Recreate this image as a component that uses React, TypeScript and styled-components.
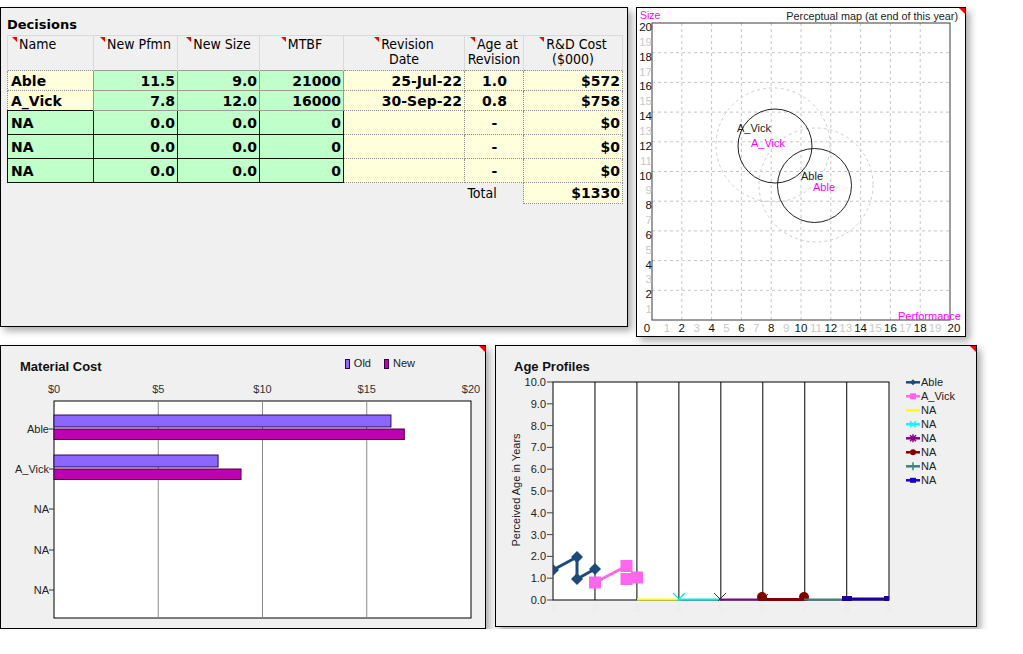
import React from "react";
import styled, { createGlobalStyle, css } from "styled-components";

const GlobalStyle = createGlobalStyle`
  html, body {
    margin: 0;
    padding: 0;
    background: #fff;
  }
  body {
    font-family: "Liberation Sans", Arial, sans-serif;
    color: #000;
  }
`;

const Page = styled.div`
  display: flex;
  flex-direction: column;
  gap: 8px;
  padding-top: 7px;
  width: 1023px;
`;

const Row = styled.div<{ $gap: number }>`
  display: flex;
  align-items: flex-start;
  gap: ${(p) => p.$gap}px;
`;

const Panel = styled.section<{ $w: number; $h: number; $bg?: string }>`
  position: relative;
  box-sizing: border-box;
  flex-shrink: 0;
  width: ${(p) => p.$w}px;
  height: ${(p) => p.$h}px;
  border: 1px solid #000;
  background: ${(p) => p.$bg ?? "#f0f0f0"};
  box-shadow: 4px 4px 7px rgba(0, 0, 0, 0.32);
`;

// red flag in the top right corner of a panel
const CornerMark = styled.span`
  position: absolute;
  top: 0;
  right: 0;
  width: 0;
  height: 0;
  border-top: 6px solid #f00;
  border-left: 6px solid transparent;
`;

const DecisionsBody = styled.div`
  padding: 0 6px;
`;

const DecTitle = styled.h2`
  margin: 0;
  padding: 9px 0 3px;
  font: 700 13px/15px "DejaVu Sans", Verdana, sans-serif;
`;

const Table = styled.table`
  border-collapse: collapse;
  table-layout: fixed;
  width: 615px;
  font-family: "DejaVu Sans", Verdana, sans-serif;
  font-size: 14px;
`;

const Th = styled.th<{ $left?: boolean }>`
  height: 35px;
  box-sizing: border-box;
  padding: 1px 2px 0 ${(p) => (p.$left ? "4px" : "2px")};
  vertical-align: top;
  text-align: ${(p) => (p.$left ? "left" : "center")};
  background: #f0f0f0;
  border: 1px solid #d9d9d9;
  border-bottom: none;
  font: 400 14px/15px "DejaVu Sans Condensed", "Liberation Sans", sans-serif;
  white-space: nowrap;
`;

const Mark = styled.span`
  display: inline-block;
  width: 0;
  height: 0;
  vertical-align: top;
  margin: 0 2px 0 0;
  border-top: 5px solid #f00;
  border-left: 5px solid transparent;
`;

type Kind = "yellow" | "green" | "plain";

const Td = styled.td<{ $kind: Kind; $align?: "left" | "right" | "center"; $h: number; $soft?: boolean }>`
  height: ${(p) => p.$h}px;
  box-sizing: border-box;
  padding: 0 2px 0 3px;
  text-align: ${(p) => p.$align ?? "right"};
  font-weight: 700;
  white-space: nowrap;
  ${(p) =>
    p.$kind === "yellow" &&
    css`
      background: #ffffdc;
      border: 1px dotted #8c8c8c;
    `}
  ${(p) =>
    p.$kind === "green" &&
    css`
      background: #c1ffca;
      border: 1px solid ${p.$soft ? "#9a9a9a" : "#111"};
    `}
  ${(p) =>
    p.$kind === "plain" &&
    css`
      border: none;
      font: 400 14px/15px "DejaVu Sans Condensed", "Liberation Sans", sans-serif;
    `}
`;

const ChartHeader = styled.div<{ $pad: number }>`
  display: flex;
  align-items: flex-start;
  height: 30px;
  box-sizing: border-box;
  padding: 13px 0 0 ${(p) => p.$pad}px;
`;

const ChartTitle = styled.h3`
  margin: 0;
  font: 700 13px/15px "Liberation Sans", Arial, sans-serif;
  color: #111;
`;

const Legend = styled.div`
  display: flex;
  gap: 13px;
  margin: -2px 70px 0 auto;
  font: 400 11px/13px "Liberation Sans", Arial, sans-serif;
  color: #222;
`;

const LegendItem = styled.span`
  display: flex;
  align-items: center;
  gap: 4px;
`;

const Swatch = styled.span<{ $color: string }>`
  display: inline-block;
  width: 3px;
  height: 8px;
  border: 1px solid #330044;
  background: ${(p) => p.$color};
`;

const ChartSvg = styled.svg`
  display: block;
  font-family: "Liberation Sans", Arial, sans-serif;
`;

const rows = [
  { name: "Able", pf: "11.5", sz: "9.0", mtbf: "21000", date: "25-Jul-22", age: "1.0", cost: "$572", mine: true },
  { name: "A_Vick", pf: "7.8", sz: "12.0", mtbf: "16000", date: "30-Sep-22", age: "0.8", cost: "$758", mine: true },
  { name: "NA", pf: "0.0", sz: "0.0", mtbf: "0", date: "", age: "-", cost: "$0", mine: false },
  { name: "NA", pf: "0.0", sz: "0.0", mtbf: "0", date: "", age: "-", cost: "$0", mine: false },
  { name: "NA", pf: "0.0", sz: "0.0", mtbf: "0", date: "", age: "-", cost: "$0", mine: false },
];

const colWidths = [86, 84, 82, 84, 121, 59, 99];

const Decisions = () => (
  <Panel $w={628} $h={320}>
    <DecisionsBody>
      <DecTitle>Decisions</DecTitle>
      <Table>
        <colgroup>
          {colWidths.map((w, i) => (
            <col key={i} style={{ width: w }} />
          ))}
        </colgroup>
        <thead>
          <tr>
            <Th $left>
              <Mark />
              Name
            </Th>
            <Th>
              <Mark />
              New Pfmn
            </Th>
            <Th>
              <Mark />
              New Size
            </Th>
            <Th>
              <Mark />
              MTBF
            </Th>
            <Th>
              <Mark />
              Revision
              <br />
              Date
            </Th>
            <Th>
              <Mark />
              Age at
              <br />
              Revision
            </Th>
            <Th>
              <Mark />
              R&amp;D Cost
              <br />
              ($000)
            </Th>
          </tr>
        </thead>
        <tbody>
          {rows.map((r, i) => {
            const h = r.mine ? 20 : 24;
            return (
              <tr key={i}>
                <Td $kind={r.mine ? "yellow" : "green"} $align="left" $h={h}>
                  {r.name}
                </Td>
                <Td $kind="green" $soft={r.mine} $h={h}>{r.pf}</Td>
                <Td $kind="green" $soft={r.mine} $h={h}>{r.sz}</Td>
                <Td $kind="green" $soft={r.mine} $h={h}>{r.mtbf}</Td>
                <Td $kind="yellow" $h={h}>{r.date}</Td>
                <Td $kind="yellow" $align="center" $h={h}>{r.age}</Td>
                <Td $kind="yellow" $h={h}>{r.cost}</Td>
              </tr>
            );
          })}
          <tr>
            <Td $kind="plain" $h={21} />
            <Td $kind="plain" $h={21} />
            <Td $kind="plain" $h={21} />
            <Td $kind="plain" $h={21} />
            <Td $kind="plain" $h={21} />
            <Td $kind="plain" $align="left" $h={21}>
              Total
            </Td>
            <Td $kind="yellow" $h={21}>$1330</Td>
          </tr>
        </tbody>
      </Table>
    </DecisionsBody>
  </Panel>
);

/* ---------- perceptual map ---------- */

const mx = (u: number) => 652 + u * 14.9;
const my = (u: number) => 320 - u * 14.85;
const units = Array.from({ length: 21 }, (_, i) => i);

const PerceptualMap = () => (
  <Panel $w={330} $h={330} $bg="#fff">
    <ChartSvg width={328} height={328} viewBox="637 8 328 328">
      {units
        .filter((u) => u > 0 && u < 20 && u % 2 === 0)
        .map((u) => (
          <g key={u} stroke="#c6c6c6" strokeDasharray="3 3">
            <line x1={mx(u)} x2={mx(u)} y1={my(20)} y2={my(0)} />
            <line x1={mx(0)} x2={mx(20)} y1={my(u)} y2={my(u)} />
          </g>
        ))}
      <rect x={652} y={my(20)} width={298} height={297} fill="none" stroke="#3a3a3a" />

      <circle cx={773} cy={145} r={57} fill="none" stroke="#cdcdcd" strokeDasharray="3 3" />
      <circle cx={816} cy={185} r={57} fill="none" stroke="#cdcdcd" strokeDasharray="3 3" />
      <circle cx={775} cy={146} r={37} fill="none" stroke="#222" />
      <circle cx={814.5} cy={185.5} r={37} fill="none" stroke="#222" />

      <g fontSize={11}>
        <text x={737} y={132} fill="#222">A_Vick</text>
        <text x={751} y={147} fill="#f0f">A_Vick</text>
        <text x={801} y={180} fill="#222">Able</text>
        <text x={813} y={191} fill="#f0f">Able</text>
      </g>

      <g fontSize={11.5}>
        {units
          .filter((u) => u > 0)
          .map((u) => (
            <text key={u} x={652} y={my(u) + 8} textAnchor="end" fill={u % 2 === 0 ? "#111" : "#c8c8c8"}>
              {u}
            </text>
          ))}
        {units.map((u) => (
          <text
            key={u}
            x={u === 0 ? 647 : u === 20 ? 954 : mx(u)}
            y={332}
            textAnchor="middle"
            fill={u % 2 === 0 ? "#111" : "#c8c8c8"}
          >
            {u}
          </text>
        ))}
      </g>

      <text x={640} y={19} fontSize={10.5} fill="#f0f">
        Size
      </text>
      <text x={961} y={320} fontSize={11} fill="#f0f" textAnchor="end">
        Performance
      </text>
      <text x={958} y={20} fontSize={10.8} fill="#222" textAnchor="end">
        Perceptual map (at end of this year)
      </text>
    </ChartSvg>
    <CornerMark />
  </Panel>
);

/* ---------- material cost ---------- */

const cx = (v: number) => 54 + v * 20.85;
const costBars = [
  { name: "Able", y: 429, old: 16.16, now: 16.8 },
  { name: "A_Vick", y: 469, old: 7.87, now: 8.97 },
  { name: "NA", y: 509 },
  { name: "NA", y: 550 },
  { name: "NA", y: 590 },
];

const MaterialCost = () => (
  <Panel $w={486} $h={284}>
    <ChartHeader $pad={19}>
      <ChartTitle>Material Cost</ChartTitle>
      <Legend>
        <LegendItem>
          <Swatch $color="#8c66ff" />
          Old
        </LegendItem>
        <LegendItem>
          <Swatch $color="#bf00b0" />
          New
        </LegendItem>
      </Legend>
    </ChartHeader>
    <ChartSvg width={484} height={252} viewBox="1 376 484 252">
      <g fontSize={11} fill="#333" textAnchor="middle">
        {[0, 5, 10, 15, 20].map((v) => (
          <text key={v} x={cx(v)} y={393}>
            ${v}
          </text>
        ))}
      </g>
      <rect x={54} y={401} width={417} height={217} fill="#fff" stroke="#000" />
      {[5, 10, 15].map((v) => (
        <line key={v} x1={cx(v)} x2={cx(v)} y1={401} y2={618} stroke="#8a8a8a" />
      ))}
      {costBars.map((b, i) => (
        <g key={i}>
          <line x1={49} x2={54} y1={b.y} y2={b.y} stroke="#333" />
          <text x={49} y={b.y + 4} fontSize={11} fill="#222" textAnchor="end">
            {b.name}
          </text>
          {b.old !== undefined && (
            <rect x={54} y={b.y - 14} width={cx(b.old) - 54} height={12} fill="#8c66ff" stroke="#2a0a55" />
          )}
          {b.now !== undefined && (
            <rect x={54} y={b.y} width={cx(b.now) - 54} height={10.5} fill="#bf00b0" stroke="#4a0040" />
          )}
        </g>
      ))}
    </ChartSvg>
    <CornerMark />
  </Panel>
);

/* ---------- age profiles ---------- */

const ax = (i: number) => 553 + (i - 1) * 41.96;
const ay = (v: number) => 600 - v * 21.8;

const diamond = (x: number, y: number, s: number) =>
  `M${x} ${y - s} L${x + s} ${y} L${x} ${y + s} L${x - s} ${y} Z`;

const ablePts = [
  [553, 570],
  [577, 557],
  [577, 579],
  [595, 569],
];
const vickPts = [
  [595, 582.5],
  [626.5, 566],
  [626.5, 579],
  [637, 577.5],
];

const legendItems = [
  { name: "Able", color: "#1b4b7d", kind: "diamond" },
  { name: "A_Vick", color: "#ff66ee", kind: "square" },
  { name: "NA", color: "#ffff00", kind: "line" },
  { name: "NA", color: "#00ffff", kind: "cross" },
  { name: "NA", color: "#880088", kind: "star" },
  { name: "NA", color: "#800000", kind: "circle" },
  { name: "NA", color: "#3f8080", kind: "plus" },
  { name: "NA", color: "#1a00c8", kind: "rect" },
];

const LegendGlyph = ({ kind, color, y }: { kind: string; color: string; y: number }) => {
  const x = 913;
  switch (kind) {
    case "diamond":
      return <path d={diamond(x, y, 3)} fill={color} />;
    case "square":
      return <rect x={x - 3} y={y - 3} width={6} height={6} fill={color} />;
    case "cross":
      return (
        <path d={`M${x - 3} ${y - 3} L${x + 3} ${y + 3} M${x + 3} ${y - 3} L${x - 3} ${y + 3}`} stroke={color} strokeWidth={1.5} />
      );
    case "star":
      return (
        <path
          d={`M${x - 3} ${y - 3} L${x + 3} ${y + 3} M${x + 3} ${y - 3} L${x - 3} ${y + 3} M${x} ${y - 4} L${x} ${y + 4}`}
          stroke={color}
          strokeWidth={1.5}
        />
      );
    case "circle":
      return <circle cx={x} cy={y} r={3} fill={color} />;
    case "plus":
      return <path d={`M${x} ${y - 4} L${x} ${y + 4}`} stroke={color} strokeWidth={1.5} />;
    case "rect":
      return <rect x={x - 3} y={y - 2.5} width={6} height={5} fill={color} />;
    default:
      return null;
  }
};

const AgeProfiles = () => (
  <Panel $w={482} $h={282}>
    <ChartHeader $pad={18}>
      <ChartTitle>Age Profiles</ChartTitle>
    </ChartHeader>
    <ChartSvg width={480} height={250} viewBox="496 376 480 250">
      <defs>
        <clipPath id="ageClip">
          <rect x={553} y={382} width={336} height={219} />
        </clipPath>
      </defs>
      <rect x={553} y={382} width={336} height={218} fill="#fff" stroke="#000" />
      {[2, 3, 4, 5, 6, 7, 8].map((i) => (
        <line key={i} x1={ax(i)} x2={ax(i)} y1={382} y2={600} stroke="#000" />
      ))}
      <g fontSize={11} fill="#222">
        {Array.from({ length: 11 }, (_, v) => (
          <g key={v}>
            <line x1={547} x2={553} y1={ay(v)} y2={ay(v)} stroke="#444" />
            <text x={546} y={ay(v) + 4} textAnchor="end">
              {v.toFixed(1)}
            </text>
          </g>
        ))}
        <text x={520} y={490} textAnchor="middle" transform="rotate(-90 520 490)">
          Perceived Age in Years
        </text>
      </g>
      <g fontSize={11} fill="#ececec" textAnchor="middle">
        {[1, 2, 3, 4, 5, 6, 7, 8, 9].map((i) => (
          <text key={i} x={ax(i)} y={612}>
            {i}
          </text>
        ))}
      </g>

      <g clipPath="url(#ageClip)">
        <line x1={637} x2={679} y1={599.5} y2={599.5} stroke="#ffff00" strokeWidth={2} />
        <line x1={679} x2={720} y1={599.5} y2={599.5} stroke="#00e8e8" strokeWidth={2} />
        <path d="M673 593 L685 605 M685 593 L673 605" stroke="#00e8e8" strokeWidth={1.2} />
        <path d="M714 593 L726 605 M726 593 L714 605" stroke="#333" strokeWidth={1} />
        <line x1={720} x2={762} y1={599.5} y2={599.5} stroke="#880088" strokeWidth={2} />
        <line x1={762} x2={804} y1={599.5} y2={599.5} stroke="#800000" strokeWidth={3} />
        <path d="M760 594 L768 602 M768 594 L760 602" stroke="#333" strokeWidth={1} />
        <circle cx={762} cy={597} r={5} fill="#800000" />
        <circle cx={804} cy={597} r={5} fill="#800000" />
        <line x1={804} x2={846} y1={599.5} y2={599.5} stroke="#3f8080" strokeWidth={2} />
        <line x1={846} x2={889} y1={599} y2={599} stroke="#1a00a0" strokeWidth={3} />
        <rect x={842} y={596} width={10} height={6} fill="#1a00a0" />
        <rect x={884} y={596} width={10} height={6} fill="#1a00a0" />

        <polyline
          points={ablePts.map((p) => p.join(",")).join(" ")}
          fill="none"
          stroke="#1b4b7d"
          strokeWidth={3}
        />
        {ablePts.map(([x, y], i) => (
          <path key={i} d={diamond(x, y, 6)} fill="#1b4b7d" />
        ))}
        <polyline
          points={vickPts.slice(0, 2).map((p) => p.join(",")).join(" ")}
          fill="none"
          stroke="#ff66ee"
          strokeWidth={3}
        />
        {vickPts.map(([x, y], i) => (
          <rect key={i} x={x - 6} y={y - 6} width={12} height={12} fill="#ff66ee" />
        ))}
      </g>

      {legendItems.map((it, i) => {
        const y = 382.3 + i * 14;
        return (
          <g key={i}>
            <line x1={906} x2={920} y1={y} y2={y} stroke={it.color} strokeWidth={2.5} />
            <LegendGlyph kind={it.kind} color={it.color} y={y} />
            <text x={921} y={y + 4} fontSize={11} fill="#222">
              {it.name}
            </text>
          </g>
        );
      })}
    </ChartSvg>
    <CornerMark />
  </Panel>
);

const App = () => (
  <>
    <GlobalStyle />
    <Page>
      <Row $gap={8}>
        <Decisions />
        <PerceptualMap />
      </Row>
      <Row $gap={9}>
        <MaterialCost />
        <AgeProfiles />
      </Row>
    </Page>
  </>
);

export default App;
